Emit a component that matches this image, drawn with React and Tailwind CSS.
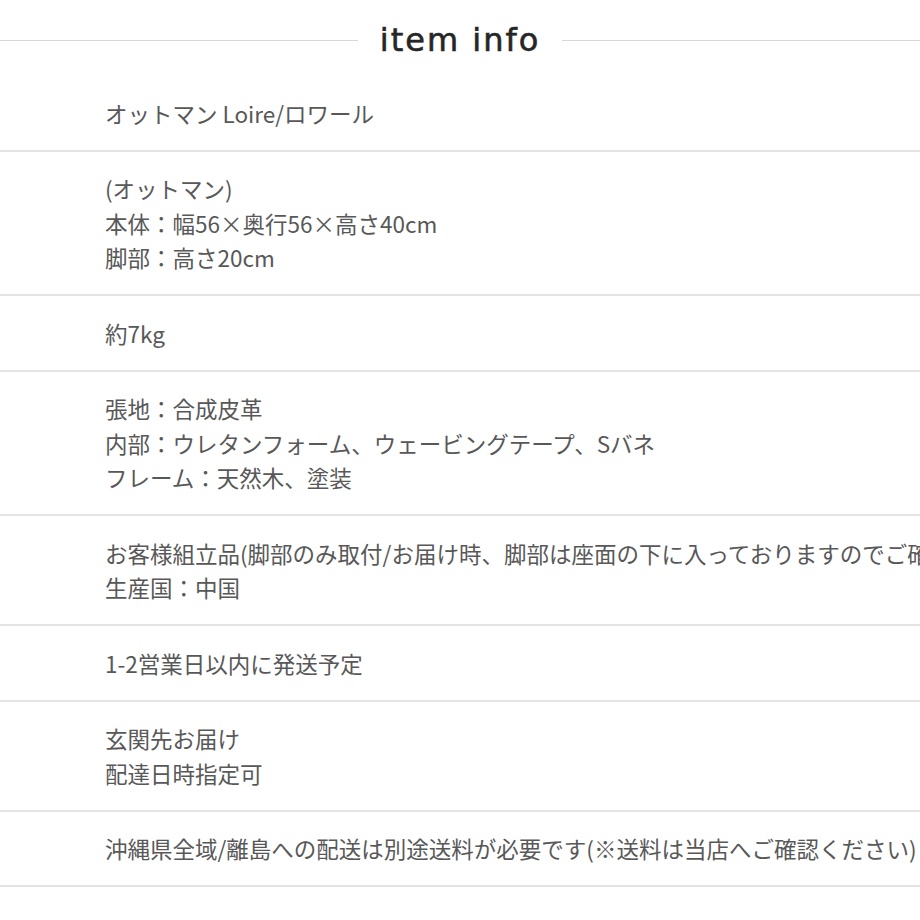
import React from "react";

const rows = [
  ["オットマン Loire/ロワール"],
  ["(オットマン)", "本体：幅56×奥行56×高さ40cm", "脚部：高さ20cm"],
  ["約7kg"],
  ["張地：合成皮革", "内部：ウレタンフォーム、ウェービングテープ、Sバネ", "フレーム：天然木、塗装"],
  ["お客様組立品(脚部のみ取付/お届け時、脚部は座面の下に入っておりますのでご確認ください)", "生産国：中国"],
  ["1-2営業日以内に発送予定"],
  ["玄関先お届け", "配達日時指定可"],
  ["沖縄県全域/離島への配送は別途送料が必要です(※送料は当店へご確認ください)"],
];

export default function App() {
  return (
    <div className="w-[920px] h-[920px] bg-white overflow-hidden">
      <div className="flex items-center h-[76px] pt-[4px]">
        <div className="flex-1 h-[1px] bg-[#d6d6d6]" />
        <div
          className="px-[22px] text-[32px] leading-none text-[#262626] tracking-[2px] [-webkit-text-stroke:0.6px_#262626]"
          style={{ fontFamily: "'DejaVu Sans', sans-serif" }}
        >
          item info
        </div>
        <div className="flex-1 h-[1px] bg-[#d6d6d6]" />
      </div>
      <div
        className="text-[22.5px] leading-[34.5px] text-[#585858]"
        style={{ fontFamily: "'Noto Sans CJK JP', sans-serif" }}
      >
        {rows.map((lines, i) => (
          <div key={i} className="border-b-2 border-[#e4e4e4] py-[19.5px] pl-[105px] whitespace-nowrap">
            {lines.map((l, j) => (
              <div key={j}>{l}</div>
            ))}
          </div>
        ))}
      </div>
    </div>
  );
}
